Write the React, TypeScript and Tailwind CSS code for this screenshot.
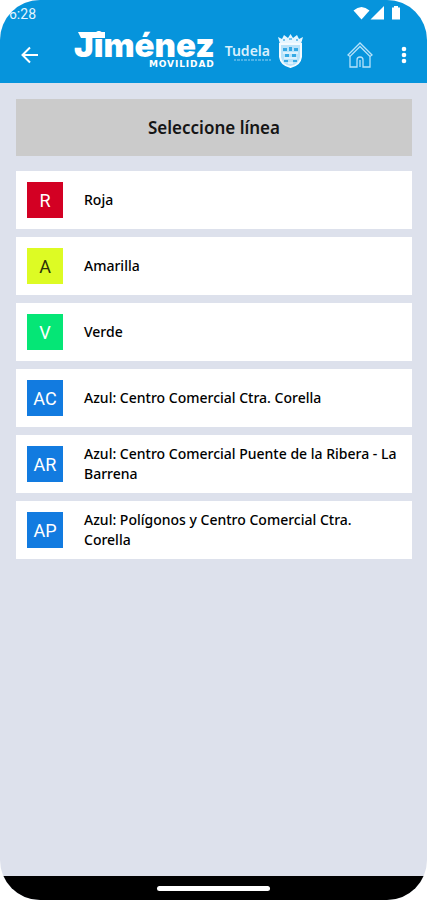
import React from "react";

type Line = { code: string; name: string; badge: string };

const lines: Line[] = [
  { code: "R", name: "Roja", badge: "bg-[#d30023] text-white" },
  { code: "A", name: "Amarilla", badge: "bg-[#ddfb24] text-[#2c3208]" },
  { code: "V", name: "Verde", badge: "bg-[#05e676] text-white" },
  { code: "AC", name: "Azul: Centro Comercial Ctra. Corella", badge: "bg-[#127be0] text-white" },
  { code: "AR", name: "Azul: Centro Comercial Puente de la Ribera - La Barrena", badge: "bg-[#127be0] text-white" },
  { code: "AP", name: "Azul: Polígonos y Centro Comercial Ctra. Corella", badge: "bg-[#127be0] text-white" },
];

function StatusBar() {
  return (
    <div className="flex h-[26px] items-center justify-between pr-[26px] pl-[9px] font-['Roboto',sans-serif] text-[14px] text-[#e4f6ff]">
      <span className="pt-[2px]">6:28</span>
      <svg width="48" height="16" viewBox="0 0 48 16" fill="#fff" aria-hidden="true">
        <path d="M0.5 5.5Q8.5-1.5 16.500 5.500L8.500 14.500Z" />
        <path d="M31 1V14.500H17.500Z" />
        <path d="M41 1h4v1.500h2V14.500h-8V2.500h2Z" />
      </svg>
    </div>
  );
}

function JimenezLogo() {
  return (
    <div className="flex flex-col items-end text-white">
      <div className="relative font-['Inter',sans-serif] text-[33px] leading-[30px] font-black">
        Jiménez
        <svg className="absolute top-[2px] left-[4px]" width="27" height="7" viewBox="0 0 27 7" fill="#fff" aria-hidden="true">
          <path d="M0 0H27V6H3Z" />
        </svg>
      </div>
      <div className="font-['DejaVu_Sans',sans-serif] text-[9px] leading-[8px] font-bold tracking-widest">MOVILIDAD</div>
    </div>
  );
}

function Crest() {
  return (
    <svg width="27" height="34" viewBox="0 0 27 34" aria-hidden="true">
      <path d="M3 10L1 3l4 2 2-4 4 3 2.500-4L16 4l4-3 2 4 4-2-2 7Z" fill="#e6f6ff" />
      <path d="M6 6h2M12 5h3M19 6h2" stroke="#0694dc" strokeWidth="1" />
      <path d="M3 10H24V23Q23 31 13.500 33Q4 31 3 23Z" fill="#b9e3fa" stroke="#f4fbff" strokeWidth="2" />
      <path d="M6 14h4v3H6ZM12 13h3v4h-3ZM17 14h4v3h-4ZM8 20h4v3H8ZM15 20h4v3h-4ZM7 26h4v2H7ZM16 26h4v2h-4Z" fill="#36a9e4" />
      <path d="M6 19H21M7 24H20M11 29h5" stroke="#fff" strokeWidth="1" />
    </svg>
  );
}

function AppBar() {
  return (
    <div className="flex h-[57px] items-center pr-5 pl-5">
      <button type="button" aria-label="Volver" className="flex size-5 items-center justify-center">
        <svg width="18" height="18" viewBox="0 0 18 18" fill="none" stroke="#fff" strokeWidth="2" aria-hidden="true">
          <path d="M17 9H2M9 1.500L1.500 9L9 16.500" />
        </svg>
      </button>
      <div className="ml-[34px] flex items-center pb-3">
        <JimenezLogo />
        <div className="ml-[10px] flex flex-col pt-2 font-['Noto_Sans',sans-serif] text-[#d8f0fd]">
          <span className="text-[14px] leading-[15px] font-semibold">Tudela</span>
          <svg className="ml-2" width="40" height="4" viewBox="0 0 40 4" aria-hidden="true">
            <path d="M1 2H39" stroke="#4db3e8" strokeWidth="2" strokeDasharray="2 1 3 1" />
          </svg>
        </div>
        <div className="ml-1 pt-1">
          <Crest />
        </div>
      </div>
      <div className="ml-auto flex items-center gap-7">
        <button type="button" aria-label="Inicio">
          <svg width="26" height="26" viewBox="0 0 26 26" fill="none" stroke="#b5e2fa" strokeWidth="1.300" aria-hidden="true">
            <path d="M1 13L13 1L25 13L23 14.500L13 4.500L3 14.500Z" />
            <path d="M3 14.500V25H10V18Q10 15 13 15Q16 15 16 18V25H23V14.500M13 18V25" />
          </svg>
        </button>
        <button type="button" aria-label="Más opciones">
          <svg width="6" height="18" viewBox="0 0 6 18" fill="#fff" aria-hidden="true">
            <circle cx="3" cy="3" r="2.300" />
            <circle cx="3" cy="9" r="2.300" />
            <circle cx="3" cy="15" r="2.300" />
          </svg>
        </button>
      </div>
    </div>
  );
}

export default function App() {
  return (
    <div className="flex min-h-screen flex-col overflow-hidden rounded-[40px] bg-[#dde1ec] text-black">
      <header className="bg-[#0694dc]">
        <StatusBar />
        <AppBar />
      </header>
      <main className="flex-1 px-4 pt-4 pr-[15px] font-['Noto_Sans',sans-serif]">
        <h1 className="flex h-[57px] items-center justify-center bg-[#cbcbcb] text-[17px] font-semibold text-[#151515]">
          Seleccione línea
        </h1>
        <ul className="mt-[15px] flex flex-col gap-2">
          {lines.map((line) => (
            <li key={line.code}>
              <button type="button" className="flex min-h-[58px] w-full items-center bg-white px-[11px] text-left">
                <span className={`flex size-9 shrink-0 items-center justify-center font-['Roboto',sans-serif] text-[18px] ${line.badge}`}>
                  {line.code}
                </span>
                <span className="ml-[21px] text-[14px] leading-[20px] font-medium">{line.name}</span>
              </button>
            </li>
          ))}
        </ul>
      </main>
      <footer className="flex h-6 items-center justify-center bg-black">
        <div className="h-[5px] w-[113px] rounded-full bg-white" />
      </footer>
    </div>
  );
}
